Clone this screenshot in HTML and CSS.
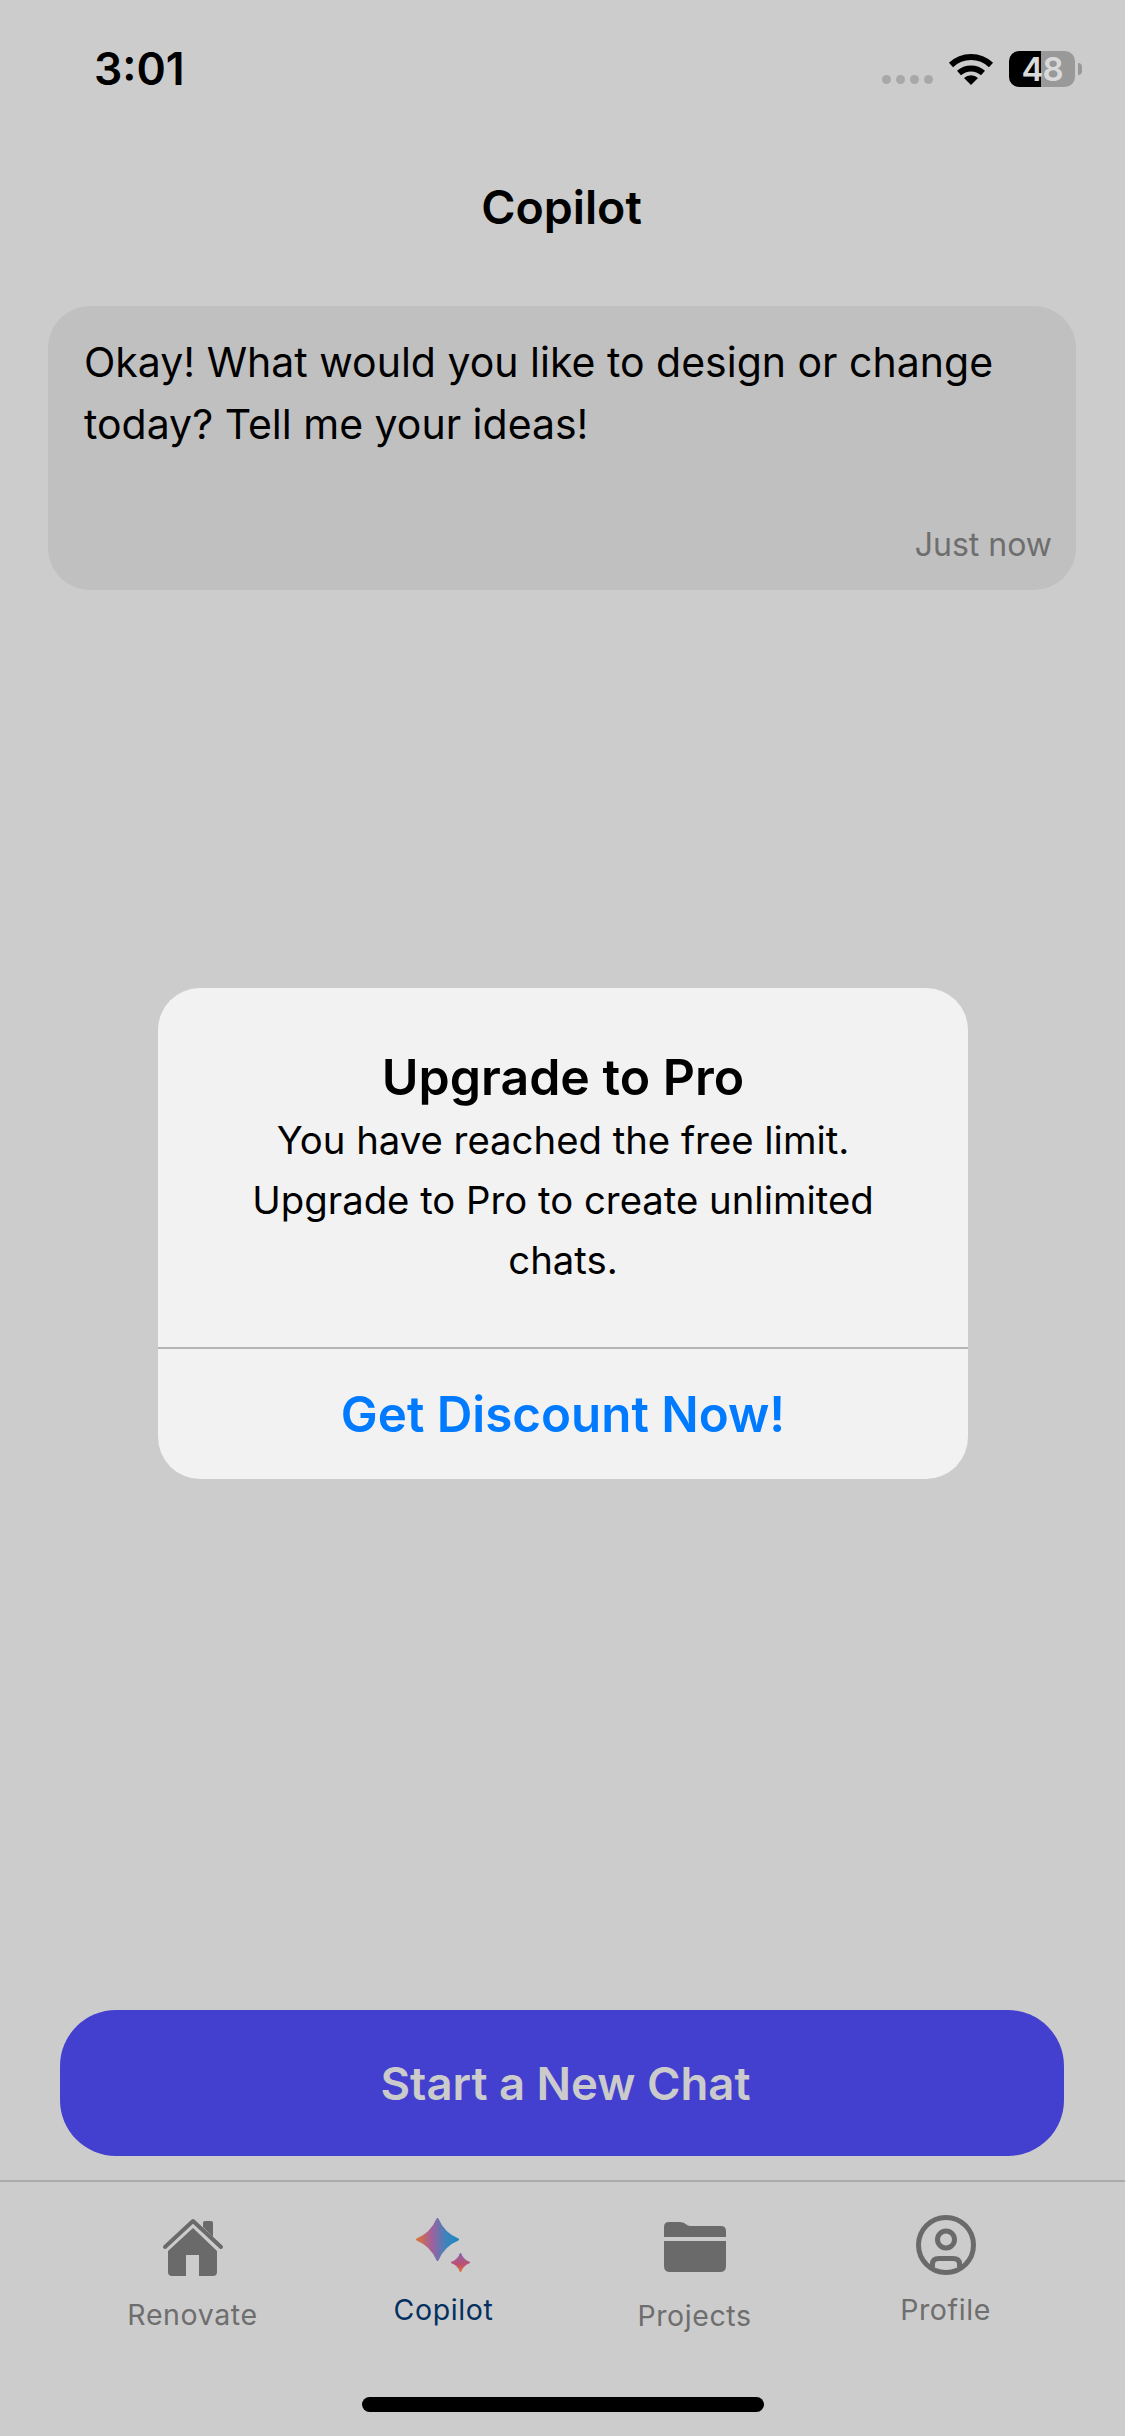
FILE: index.html
```html
<!DOCTYPE html>
<html lang="en">
<head>
<meta charset="UTF-8" />
<meta name="viewport" content="width=device-width, initial-scale=1.0" />
<title>Copilot</title>
<link rel="stylesheet" href="styles.css">
</head>
<body>
  <div class="screen">
    <!-- Status bar -->
    <header class="status">
      <span class="time">3:01</span>
      <div class="status-right">
        <div class="dots"><i></i><i></i><i></i><i></i></div>
        <svg class="wifi" viewBox="0 0 46 33">
          <path d="M3 13A29 29 0 0 1 43 13" fill="none" stroke="#000" stroke-width="6"/>
          <path d="M11 21A18 18 0 0 1 35 21" fill="none" stroke="#000" stroke-width="6"/>
          <path d="M23 33L16 26A10 10 0 0 1 30 26Z" fill="#000"/>
        </svg>
        <div class="battery">48</div>
        <div class="battery-nub"></div>
      </div>
    </header>

    <h1 class="title">Copilot</h1>

    <!-- Message -->
    <section class="bubble">
      <p class="bubble-text">Okay! What would you like to design or change today? Tell me your ideas!</p>
      <span class="bubble-time">Just now</span>
    </section>

    <div class="spacer"></div>

    <button class="cta">Start a New Chat</button>

    <!-- Tabs -->
    <nav class="tabs">
      <a class="tab tab-home">
        <svg class="icon-home" viewBox="42 28 62 60">
          <path d="M45 57L73 31L101 57" fill="none" stroke="#6a6a6a" stroke-width="4" stroke-linecap="round" stroke-linejoin="round"/>
          <path d="M48 61L73 38L97 61V82Q97 86 93 86H79V65H66V86H52Q48 86 48 82Z" fill="#6a6a6a"/>
          <path d="M83 33Q83 31 85 31H91Q93 31 93 33V47L83 37Z" fill="#6a6a6a"/>
        </svg>
        <span class="tab-label">Renovate</span>
      </a>
      <a class="tab tab-copilot">
        <svg class="icon-spark" viewBox="0 0 55 55">
          <defs>
            <linearGradient id="sparkBig" x1="0" y1="0.5" x2="1" y2="0.5">
              <stop offset="0" stop-color="#dc7336"/>
              <stop offset="0.35" stop-color="#a45f9c"/>
              <stop offset="0.7" stop-color="#3f83bd"/>
              <stop offset="1" stop-color="#1f88bf"/>
            </linearGradient>
            <linearGradient id="sparkSmall" x1="0.5" y1="0" x2="0.5" y2="1">
              <stop offset="0" stop-color="#8a62ad"/>
              <stop offset="0.6" stop-color="#bd5070"/>
              <stop offset="1" stop-color="#e0702f"/>
            </linearGradient>
          </defs>
          <path d="M21.5 1Q27.5 15.5 42 21.5Q27.5 27.5 21.5 42Q15.5 27.5 1 21.5Q15.5 15.5 21.5 1Z" fill="url(#sparkBig)" stroke="url(#sparkBig)" stroke-width="2" stroke-linejoin="round"/>
          <path d="M44.5 35Q47 42 54 44.5Q47 47 44.5 54Q42 47 35 44.5Q42 42 44.5 35Z" fill="url(#sparkSmall)" stroke="url(#sparkSmall)" stroke-width="1" stroke-linejoin="round"/>
        </svg>
        <span class="tab-label tab-label-on">Copilot</span>
      </a>
      <a class="tab tab-projects">
        <svg class="icon-folder" viewBox="42 32 62 50">
          <path d="M42 47V37Q42 32 47 32H58Q62 32 65 35Q66.500 36 69 36H99Q104 36 104 41V47Z" fill="#6a6a6a"/>
          <path d="M42 51H104V76Q104 82 98 82H48Q42 82 42 76Z" fill="#6a6a6a"/>
        </svg>
        <span class="tab-label">Projects</span>
      </a>
      <a class="tab tab-profile">
        <svg class="icon-profile" viewBox="296 25 60 60">
          <circle cx="326" cy="55" r="27.500" fill="none" stroke="#6a6a6a" stroke-width="5"/>
          <circle cx="326" cy="49.500" r="8.500" fill="none" stroke="#6a6a6a" stroke-width="5"/>
          <path d="M312.500 77V74Q312.500 68.500 319 68.500H333Q339.500 68.500 339.500 74V77" fill="none" stroke="#6a6a6a" stroke-width="5"/>
        </svg>
        <span class="tab-label">Profile</span>
      </a>
    </nav>

    <div class="home-bar"><div class="home-indicator"></div></div>

    <!-- Alert, sits over the page -->
    <div class="alert">
      <div class="alert-body">
        <h2 class="alert-title">Upgrade to Pro</h2>
        <p class="alert-text">You have reached the free limit. Upgrade to Pro to create unlimited chats.</p>
      </div>
      <a class="alert-action">Get Discount Now!</a>
    </div>
  </div>
</body>
</html>
```
FILE: styles.css
```css
/* Reset */
*{box-sizing:border-box;margin:0;padding:0}
body{
  background:#cccccc;
  font-family:Inter,"Liberation Sans",sans-serif;
  color:#000;
}

.screen{
  position:relative;
  width:1125px;
  height:2436px;
  display:flex;
  flex-direction:column;
  overflow:hidden;
}

/* Status bar */
.status{
  height:165px;
  padding:45px 43px 0 94px;
  display:flex;
  justify-content:space-between;
  align-items:flex-start;
}
.time{font-size:44.500px;font-weight:600;line-height:48px}
.status-right{display:flex;align-items:flex-start;padding-top:6px}
.dots{display:flex;gap:5px;margin-top:24px;margin-right:15px}
.dots i{display:block;width:9px;height:9px;border-radius:50%;background:#a8a8a8}
.wifi{width:46px;height:33px;margin-top:1px;margin-right:15px}
.battery{
  width:66px;
  height:36px;
  border-radius:10px;
  background:linear-gradient(90deg,#000 48%,#999 48%);
  color:#d9d9d9;
  font-size:33px;
  font-weight:600;
  letter-spacing:-1px;
  line-height:36px;
  text-align:center;
}
.battery-nub{width:4px;height:12px;margin:12px 0 0 3px;border-radius:0 4px 4px 0;background:#999}

/* Header */
.title{
  padding-right:2px;
  font-size:46.500px;
  font-weight:600;
  line-height:84px;
  text-align:center;
}

/* Message bubble */
.bubble{
  margin:57px 49px 0 48px;
  height:284px;
  padding:25px 24px 0 36px;
  border-radius:42px;
  background:#c0c0c0;
  display:flex;
  flex-direction:column;
}
.bubble-text{font-size:41px;line-height:62px}
.bubble-time{
  margin-top:auto;
  margin-bottom:23px;
  align-self:flex-end;
  font-size:32px;
  line-height:44px;
  color:#6e6e6e;
}

.spacer{flex:1}

/* Main button */
.cta{
  margin:0 61px 0 60px;
  height:146px;
  padding-left:7px;
  border:0;
  border-radius:56px;
  background:#4340cf;
  color:#cbcbcb;
  font-family:inherit;
  font-size:45.500px;
  font-weight:600;
}

/* Tabs */
.tabs{
  margin-top:24px;
  height:183px;
  padding-left:67px;
  padding-right:53px;
  border-top:2px solid #aaaaaa;
  display:grid;
  grid-template-columns:repeat(4,251px);
}
.tab{display:flex;flex-direction:column;align-items:center}
.tab-label{font-size:28.500px;line-height:40px;color:#6e6e6e;letter-spacing:.6px}
.tab-label-on{color:#04305f}
.icon-home{width:62px;height:60px;margin-top:36px}
.tab-home .tab-label{margin-top:17px}
.icon-spark{width:55px;height:55px;margin-top:36px}
.tab-copilot .tab-label{margin-top:17px}
.icon-folder{width:62px;height:50px;margin-top:40px}
.tab-projects .tab-label{margin-top:24px}
.icon-profile{width:60px;height:60px;margin-top:33px}
.tab-profile .tab-label{margin-top:15px}

/* Home indicator */
.home-bar{height:73px;padding-top:34px;display:flex;justify-content:center}
.home-indicator{width:402px;height:15px;border-radius:8px;background:#000}

/* Alert */
.alert{
  position:absolute;
  left:158px;
  top:988px;
  width:810px;
  height:491px;
  border-radius:42px;
  background:#f2f2f2;
  display:flex;
  flex-direction:column;
  text-align:center;
}
.alert-body{
  height:361px;
  padding:60px 60px 0;
  border-bottom:2px solid #b5b5b5;
}
.alert-title{font-size:50px;font-weight:600;line-height:58px}
.alert-text{margin-top:4px;font-size:38.300px;line-height:60px}
.alert-action{
  flex:1;
  display:flex;
  align-items:center;
  justify-content:center;
  color:#007aff;
  font-size:49.300px;
  font-weight:600;
}
```
